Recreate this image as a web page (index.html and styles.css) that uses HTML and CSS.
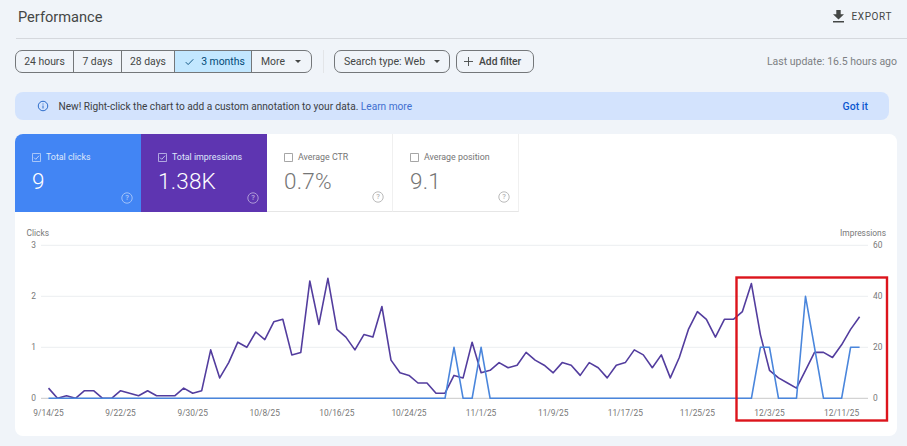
FILE: index.html
```html
<!DOCTYPE html>
<html lang="en">
<head>
<meta charset="utf-8">
<title>Performance</title>
<link rel="stylesheet" href="styles.css">
</head>
<body>
<header class="topbar">
  <h1 class="title">Performance</h1>
  <button class="export">
    <svg class="export-icon" viewBox="0 0 12 14"><path d="M3.6 0h4.8v4.6H12L6 10.4 0 4.6h3.6zM0 12h12v1.6H0z"/></svg>
    <span>EXPORT</span>
  </button>
</header>
<section class="filters">
  <div class="segments">
    <span class="seg">24 hours</span>
    <span class="seg">7 days</span>
    <span class="seg">28 days</span>
    <span class="seg seg-on"><svg class="check" viewBox="0 0 12 10"><path d="M1 5.2 4.2 8.4 11 1.4"/></svg>3 months</span>
    <span class="seg seg-more">More<i class="caret"></i></span>
  </div>
  <span class="divider"></span>
  <span class="chip chip-type">Search type: Web<i class="caret"></i></span>
  <span class="chip chip-add"><svg class="plus" viewBox="0 0 10 10"><path d="M5 0v10M0 5h10"/></svg>Add filter</span>
  <span class="updated">Last update: 16.5 hours ago</span>
</section>
<aside class="banner">
  <svg class="info" viewBox="0 0 24 24"><circle cx="12" cy="12" r="9.5"/><path d="M12 11v6M12 7v2"/></svg>
  <span class="banner-text">New! Right-click the chart to add a custom annotation to your data. <a class="link">Learn more</a></span>
  <a class="got">Got it</a>
</aside>
<main class="card">
  <div class="tiles">
    <div class="tile tile-blue">
      <div class="tile-head"><svg class="box" viewBox="0 0 12 12"><rect x=".5" y=".5" width="11" height="11" rx="1"/><path d="M2.8 6.2 5 8.4 9.4 3.6"/></svg>Total clicks</div>
      <div class="tile-value">9</div>
      <svg class="help" viewBox="0 0 12 12"><circle cx="6" cy="6" r="5.2"/><text x="6" y="8.4" text-anchor="middle">?</text></svg>
    </div>
    <div class="tile tile-purple">
      <div class="tile-head"><svg class="box" viewBox="0 0 12 12"><rect x=".5" y=".5" width="11" height="11" rx="1"/><path d="M2.8 6.2 5 8.4 9.4 3.6"/></svg>Total impressions</div>
      <div class="tile-value">1.38K</div>
      <svg class="help" viewBox="0 0 12 12"><circle cx="6" cy="6" r="5.2"/><text x="6" y="8.4" text-anchor="middle">?</text></svg>
    </div>
    <div class="tile tile-off">
      <div class="tile-head"><svg class="box" viewBox="0 0 12 12"><rect x=".5" y=".5" width="11" height="11" rx="1"/></svg>Average CTR</div>
      <div class="tile-value">0.7%</div>
      <svg class="help" viewBox="0 0 12 12"><circle cx="6" cy="6" r="5.2"/><text x="6" y="8.4" text-anchor="middle">?</text></svg>
    </div>
    <div class="tile tile-off">
      <div class="tile-head"><svg class="box" viewBox="0 0 12 12"><rect x=".5" y=".5" width="11" height="11" rx="1"/></svg>Average position</div>
      <div class="tile-value">9.1</div>
      <svg class="help" viewBox="0 0 12 12"><circle cx="6" cy="6" r="5.2"/><text x="6" y="8.4" text-anchor="middle">?</text></svg>
    </div>
  </div>
  <svg class="chart" id="chart" width="882" height="224" viewBox="15 212 882 224"></svg>
</main>
<script src="chart.js"></script>
</body>
</html>
```

FILE: styles.css
```css
* { box-sizing: border-box; }
html, body { margin: 0; height: 100%; }
body {
  width: 907px;
  height: 446px;
  overflow: hidden;
  background: #f0f4f9;
  font-family: Roboto, "Liberation Sans", sans-serif;
  color: #444746;
  padding-left: 15px;
}
.topbar {
  display: flex;
  align-items: center;
  justify-content: space-between;
  height: 39px;
  margin-left: 1px;
  padding: 0 15px 5px 2px;
  border-bottom: 1px solid #d5d8dd;
}
.title { margin: 0; font-size: 14.6px; font-weight: 400; color: #444746; }
.export {
  display: flex; align-items: center; gap: 8px;
  background: none; border: 0; padding: 0; margin: 0;
  font: 400 10px Roboto, sans-serif; letter-spacing: .6px; color: #444746;
}
.export-icon { width: 11px; height: 13px; fill: #444746; }
.filters {
  display: flex; align-items: center;
  height: 23px; margin-top: 11px;
  font-size: 10.4px; color: #444746;
}
.segments {
  display: flex; height: 23px; width: 297px;
  border: 1px solid #74777a; border-radius: 7px; overflow: hidden;
}
.seg { display: flex; align-items: center; justify-content: center; padding: 0 8px; border-right: 1px solid #74777a; white-space: nowrap; }
.seg:nth-child(1) { width: 58px; }
.seg:nth-child(2) { width: 48px; }
.seg:nth-child(3) { width: 53px; }
.seg-on { width: 77px; background: #c2e7ff; color: #004a77; gap: 7px; padding-left: 10px; padding-right: 6px; }
.seg-more { flex: 1; border-right: 0; gap: 10px; justify-content: flex-start; padding-left: 9px; }
.check { width: 9px; height: 8px; fill: none; stroke: #004a77; stroke-width: 1.2; }
.caret { width: 0; height: 0; border: 3px solid transparent; border-top-color: #444746; border-bottom-width: 0; }
.divider { width: 1px; height: 23px; background: #e3e5e8; margin: 0 11px 0 11px; }
.chip {
  display: flex; align-items: center; height: 23px;
  border: 1px solid #74777a; border-radius: 7px; white-space: nowrap;
}
.chip-type { width: 116px; justify-content: center; gap: 9px; margin-left: -1px; font-size: 10.6px; }
.chip-add { width: 78px; margin-left: 6px; gap: 6px; padding-left: 7px; font-weight: 500; font-size: 10.3px; }
.plus { width: 9px; height: 9px; stroke: #444746; stroke-width: 1; }
.updated { margin-left: auto; padding-right: 10px; color: #7c7f83; font-size: 10.5px; }
.banner {
  display: flex; align-items: center;
  width: 874px; height: 28px; margin-top: 19px;
  padding: 0 21px 0 22px;
  background: #d3e3fd; border-radius: 8px;
  font-size: 10.15px; color: #3c4043;
}
.info { width: 12px; height: 12px; margin-right: 9.5px; fill: none; stroke: #1a5fc4; stroke-width: 1.8; }
.banner-text { flex: 1; }
.link { color: #3f6fd0; }
.got { color: #0b57d0; font-weight: 500; font-size: 10.5px; }
.card {
  width: 882px; height: 302px; margin-top: 14px;
  background: #fff; border-radius: 8px; overflow: hidden;
}
.tiles { display: flex; height: 78px; }
.tile {
  position: relative; width: 126px; height: 78px;
  padding: 17px 0 0 17px;
}
.tile-blue { background: #4285f4; color: #fff; }
.tile-purple { background: #5e35b1; color: #fff; }
.tile-off { color: #757575; border-right: 1px solid #f0f0f0; border-bottom: 1px solid #e6e6e6; }
.tile-head { display: flex; align-items: center; gap: 5px; font-size: 8.85px; height: 12px; }
.tile-blue .tile-head, .tile-purple .tile-head { color: #dfe8fb; }
.box { width: 9px; height: 9px; fill: none; stroke: currentColor; stroke-width: 1; }
.tile-value { font-size: 22.5px; font-weight: 300; line-height: 28px; margin-top: 4px; letter-spacing: .2px; }
.help { position: absolute; right: 8px; bottom: 8px; width: 12px; height: 12px; fill: none; stroke: currentColor; stroke-width: .9; opacity: .55; }
.help text { font: 500 7.5px Roboto, sans-serif; fill: currentColor; stroke: none; }
.chart { display: block; }
.axis { font: 400 8.4px Roboto, sans-serif; fill: #787878; }
.grid { stroke: #eceef0; stroke-width: 1; }
.base { stroke: #c8c8c8; stroke-width: 1; }
.line { fill: none; stroke-linejoin: round; stroke-width: 1.6; }
.line-clicks { stroke: #4a86dc; }
.line-impr { stroke: #533d9e; }
.mark { fill: none; stroke: #dc141c; stroke-width: 2.4; }
```

FILE: chart.js
```js
const impressions = [4,0,1,0,3,3,0,0,3,2,1,3,1,1,1,4,2,3,19,8,14,22,20,26,23,30,31,17,18,46,29,47,27,24,19,25,24,36,15,10,9,6,6,2,2,9,8,22,10,11,14,12,13,18,15,13,10,14,13,9,14,12,8,13,14,19,17,12,17,8,16,27,34,31,24,31,31,34,45,25,11,8,6,4,11,18,18,16,21,27,32];
const clicks = Array(91).fill(0);
[[45,1],[48,1],[79,1],[80,1],[84,2],[85,1],[89,1],[90,1]].forEach(([i, v]) => { clicks[i] = v; });
const x = i => 48.5 + i * 9.012;
const Y0 = 398.3, STEP = 51;
const y = v => Y0 - v * STEP;
const pts = (arr, k) => arr.map((v, i) => `${x(i).toFixed(1)},${y(v * k).toFixed(1)}`).join(' ');
let s = '';
for (let t = 0; t <= 3; t++) {
  s += `<line class="${t ? 'grid' : 'base'}" x1="41" x2="868" y1="${y(t)}" y2="${y(t)}"/>`;
  s += `<text class="axis" x="36" y="${y(t) + 3}" text-anchor="end">${t}</text>`;
  s += `<text class="axis" x="873" y="${y(t) + 3}">${t * 20}</text>`;
}
s += `<text class="axis" x="26.5" y="236">Clicks</text><text class="axis" x="886" y="236" text-anchor="end">Impressions</text>`;
['9/14/25','9/22/25','9/30/25','10/8/25','10/16/25','10/24/25','11/1/25','11/9/25','11/17/25','11/25/25','12/3/25','12/11/25'].forEach((d, n) => {
  s += `<text class="axis" x="${x(n * 8)}" y="416" text-anchor="middle">${d}</text>`;
});
s += `<polyline class="line line-impr" points="${pts(impressions, 1 / 20)}"/>`;
s += `<polyline class="line line-clicks" points="${pts(clicks, 1)}"/>`;
s += `<rect class="mark" x="736.5" y="277.5" width="150.5" height="143"/>`;
document.getElementById('chart').innerHTML = s;
```
